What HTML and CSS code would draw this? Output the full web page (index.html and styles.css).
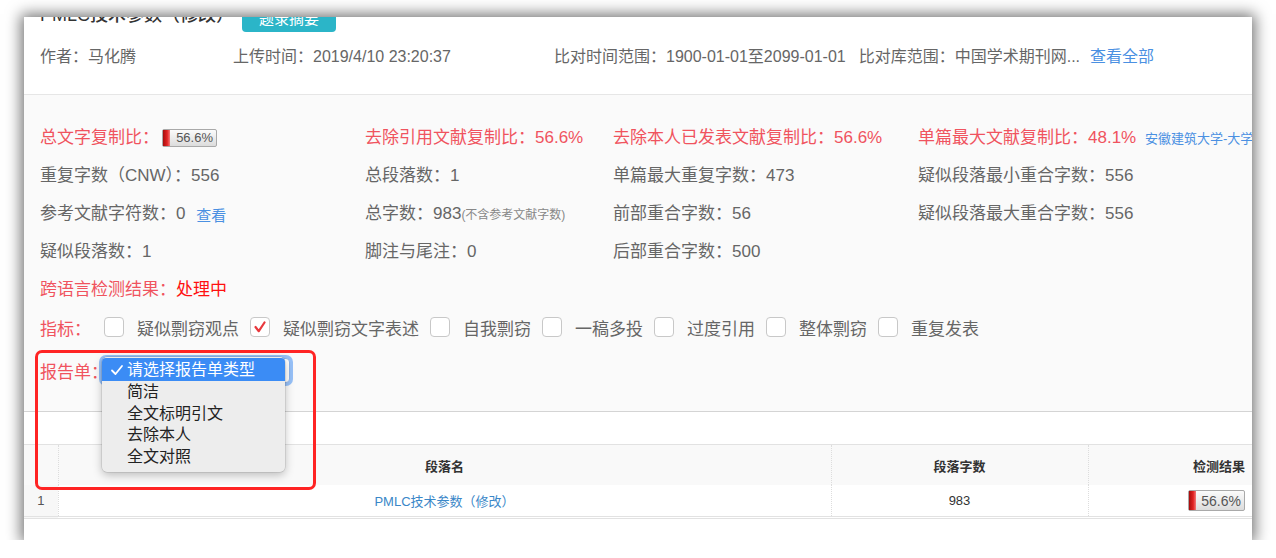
FILE: index.html
```html
<!DOCTYPE html>
<html lang="zh-CN">
<head>
    <meta charset="UTF-8">
    <title>检测报告</title>
    <link rel="stylesheet" href="styles.css">
</head>
<body>
    <div class="window">
        <div class="doc-header">
            <div class="title-row">
                <h2>PMLC技术参数（修改）</h2>
                <span class="badge">题录摘要</span>
            </div>
            <div class="meta-row">
                <span class="meta author">作者：马化腾</span>
                <span class="meta upload">上传时间：2019/4/10 23:20:37</span>
                <span class="meta range">比对时间范围：1900-01-01至2099-01-01</span>
                <span class="meta">比对库范围：中国学术期刊网...</span>
                <a href="#" class="link">查看全部</a>
            </div>
        </div>

        <div class="panel">
            <div class="stats">
                <div class="red">总文字复制比：<span class="rate"><span class="fill"></span>56.6%</span></div>
                <div class="red">去除引用文献复制比：56.6%</div>
                <div class="red">去除本人已发表文献复制比：56.6%</div>
                <div class="red">单篇最大文献复制比：48.1% <a href="#" class="small-link">安徽建筑大学-大学生创新创业训练计划项目</a></div>

                <div>重复字数（CNW）：556</div>
                <div>总段落数：1</div>
                <div>单篇最大重复字数：473</div>
                <div>疑似段落最小重合字数：556</div>

                <div>参考文献字符数：0 <a href="#" class="view-link">查看</a></div>
                <div>总字数：983<small>(不含参考文献字数)</small></div>
                <div>前部重合字数：56</div>
                <div>疑似段落最大重合字数：556</div>

                <div>疑似段落数：1</div>
                <div>脚注与尾注：0</div>
                <div>后部重合字数：500</div>
                <div></div>

                <div class="red">跨语言检测结果：<span class="bright">处理中</span></div>
            </div>

            <div class="indicators">
                <span class="red label">指标：</span>
                <label class="check"><span class="box"></span>疑似剽窃观点</label>
                <label class="check"><span class="box checked"><svg width="20" height="20" viewBox="0 0 20 20"><polyline points="5.5,10 8.8,14.2 14.5,5.5" fill="none" stroke="#e8383d" stroke-width="2.2" stroke-linecap="round" stroke-linejoin="round"/></svg></span>疑似剽窃文字表述</label>
                <label class="check"><span class="box"></span>自我剽窃</label>
                <label class="check"><span class="box"></span>一稿多投</label>
                <label class="check"><span class="box"></span>过度引用</label>
                <label class="check"><span class="box"></span>整体剽窃</label>
                <label class="check"><span class="box"></span>重复发表</label>
            </div>

            <div class="report-row">
                <span class="red label">报告单：</span>
                <span class="select"></span>
                <ul class="menu">
                    <li class="active"><svg width="14" height="14" viewBox="0 0 14 14"><polyline points="2,7.5 5.5,11 12,3" fill="none" stroke="#fff" stroke-width="1.8" stroke-linecap="round" stroke-linejoin="round"/></svg>请选择报告单类型</li>
                    <li>简洁</li>
                    <li>全文标明引文</li>
                    <li>去除本人</li>
                    <li>全文对照</li>
                </ul>
            </div>
        </div>

        <div class="table-wrap">
            <table class="result-table">
                <colgroup>
                    <col class="c-no">
                    <col class="c-name">
                    <col class="c-count">
                    <col class="c-result">
                </colgroup>
                <thead>
                    <tr>
                        <th></th>
                        <th>段落名</th>
                        <th>段落字数</th>
                        <th class="right">检测结果</th>
                    </tr>
                </thead>
                <tbody>
                    <tr>
                        <td class="no">1</td>
                        <td><a href="#" class="para-link">PMLC技术参数（修改）</a></td>
                        <td>983</td>
                        <td class="right"><span class="rate big"><span class="fill"></span>56.6%</span></td>
                    </tr>
                </tbody>
            </table>
        </div>

        <div class="mark"></div>
    </div>
</body>
</html>
```

FILE: styles.css
```css
body {
    margin: 0;
    padding: 0;
    background-color: #fff;
    font-family: "Liberation Sans", "Noto Sans CJK SC", sans-serif;
}

.window {
    position: relative;
    margin: 17px 0 0 24px;
    width: 1228px;
    height: 523px;
    background-color: #fff;
    overflow: hidden;
    box-shadow: 0 0 14px 3px rgba(0, 0, 0, 0.55);
}

/* header */
.doc-header {
    display: flow-root;
    padding: 0 16px;
    height: 78px;
    border-bottom: 1px solid #e6e6e6;
    box-sizing: border-box;
}

.title-row {
    display: flex;
    align-items: flex-end;
    height: 32px;
    margin-top: -17px;
}

.title-row h2 {
    margin: 0;
    font-size: 18px;
    font-weight: 500;
    color: #333;
    line-height: 26px;
    margin-bottom: 4px;
}

.badge {
    margin-left: 8px;
    background-color: #2bb5c8;
    color: #fff;
    font-size: 15px;
    line-height: 26px;
    padding: 0 17px;
    border-radius: 4px;
}

.meta-row {
    display: flex;
    align-items: center;
    height: 30px;
    margin-top: 8px;
    font-size: 16px;
    color: #666;
    white-space: nowrap;
}

.meta.author {
    width: 193px;
}

.meta.upload {
    width: 321px;
}

.meta.range {
    margin-right: 13px;
}

.link {
    margin-left: 10px;
    color: #4a90e2;
    text-decoration: none;
}

/* statistics panel */
.panel {
    position: relative;
    background-color: #fafafa;
    border-bottom: 1px solid #d4d4d4;
    padding: 21px 0 22px 16px;
    font-size: 17px;
    color: #666;
}

.stats {
    display: grid;
    grid-template-columns: 325px 248px 305px 1fr;
    grid-auto-rows: 38px;
    align-items: center;
    white-space: nowrap;
}

.red {
    color: #f0535e;
}

.bright {
    color: #ff1010;
}

.small-link {
    margin-left: 4px;
    font-size: 13px;
    color: #4a90e2;
    text-decoration: none;
}

.view-link {
    margin-left: 6px;
    font-size: 15px;
    color: #4a90e2;
    text-decoration: none;
    position: relative;
    top: 2px;
}

.stats small {
    font-size: 12px;
    color: #888;
}

.rate {
    display: inline-flex;
    justify-content: space-between;
    align-items: center;
    width: 55px;
    height: 18px;
    margin-left: 3px;
    padding-right: 3px;
    box-sizing: border-box;
    border: 1px solid #a9a9a9;
    border-radius: 2px;
    background: linear-gradient(#fbfbfb, #dcdcdc);
    font-size: 13px;
    line-height: 16px;
    color: #555;
    vertical-align: -3px;
}

.rate .fill {
    align-self: stretch;
    width: 7px;
    background: linear-gradient(90deg, #a50d0d, #e22222 60%, #f37a7a);
}

.rate.big {
    width: 57px;
    height: 21px;
    font-size: 14px;
    margin-left: 0;
}

/* indicator checkboxes */
.indicators {
    display: flex;
    align-items: center;
    height: 38px;
    margin-top: 2px;
    white-space: nowrap;
}

.indicators .label {
    margin-right: 13px;
}

.check {
    display: flex;
    align-items: center;
    margin-right: 11px;
}

.box {
    width: 20px;
    height: 20px;
    box-sizing: border-box;
    border: 1px solid #c8c8c8;
    border-radius: 4px;
    background-color: #fff;
    margin-right: 13px;
}

.box svg {
    display: block;
    margin: -1px;
}

/* report select with the open option list */
.report-row {
    position: relative;
    display: flex;
    align-items: center;
    height: 38px;
    margin-top: 5px;
}

.select {
    width: 188px;
    height: 25px;
    margin-left: -6px;
    box-sizing: border-box;
    border: 1px solid #8fb5ea;
    border-radius: 4px;
    background-color: #fff;
    box-shadow: 0 0 0 3px rgba(70, 145, 245, 0.55);
}

.menu {
    position: absolute;
    left: 62px;
    top: 6px;
    width: 183px;
    margin: 0;
    padding: 1px 0 5px;
    list-style: none;
    background-color: #ededed;
    border-radius: 5px;
    box-shadow: 0 3px 10px rgba(0, 0, 0, 0.25), 0 0 0 0.5px rgba(0, 0, 0, 0.15);
    font-size: 16px;
    color: #222;
}

.menu li {
    height: 21.5px;
    line-height: 21.5px;
    padding-left: 25px;
}

.menu li.active {
    display: flex;
    align-items: center;
    height: 23px;
    line-height: 23px;
    padding-left: 8px;
    background-color: #3b8cf5;
    color: #fff;
    border-radius: 4px 4px 0 0;
}

.menu li.active svg {
    margin-right: 3px;
}

/* paragraph table */
.table-wrap {
    padding-top: 32px;
}

.result-table {
    width: 1228px;
    table-layout: fixed;
    border-collapse: collapse;
    font-size: 13px;
    color: #333;
}

.c-no {
    width: 34px;
}

.c-name {
    width: 773px;
}

.c-count {
    width: 257px;
}

.c-result {
    width: 164px;
}

.result-table thead tr {
    background-color: #f9f9f9;
    border-top: 1px solid #e2e2e2;
}

.result-table th {
    height: 40px;
    padding: 0;
    font-weight: bold;
    text-align: center;
    border-left: 1px dotted #ddd;
}

.result-table td {
    height: 31px;
    padding: 0;
    text-align: center;
    border-left: 1px dotted #ddd;
    border-bottom: 3px double #e2e2e2;
}

.result-table th:first-child,
.result-table td:first-child {
    border-left: none;
}

.result-table .right {
    text-align: right;
    padding-right: 7px;
}

.result-table td.no {
    background-color: #f7f7f7;
    color: #555;
}

.para-link {
    color: #3a87c8;
    text-decoration: none;
}

/* red annotation frame */
.mark {
    position: absolute;
    left: 11px;
    top: 333px;
    width: 281px;
    height: 140px;
    box-sizing: border-box;
    border: 3px solid #ff2424;
    border-radius: 7px;
}
```
